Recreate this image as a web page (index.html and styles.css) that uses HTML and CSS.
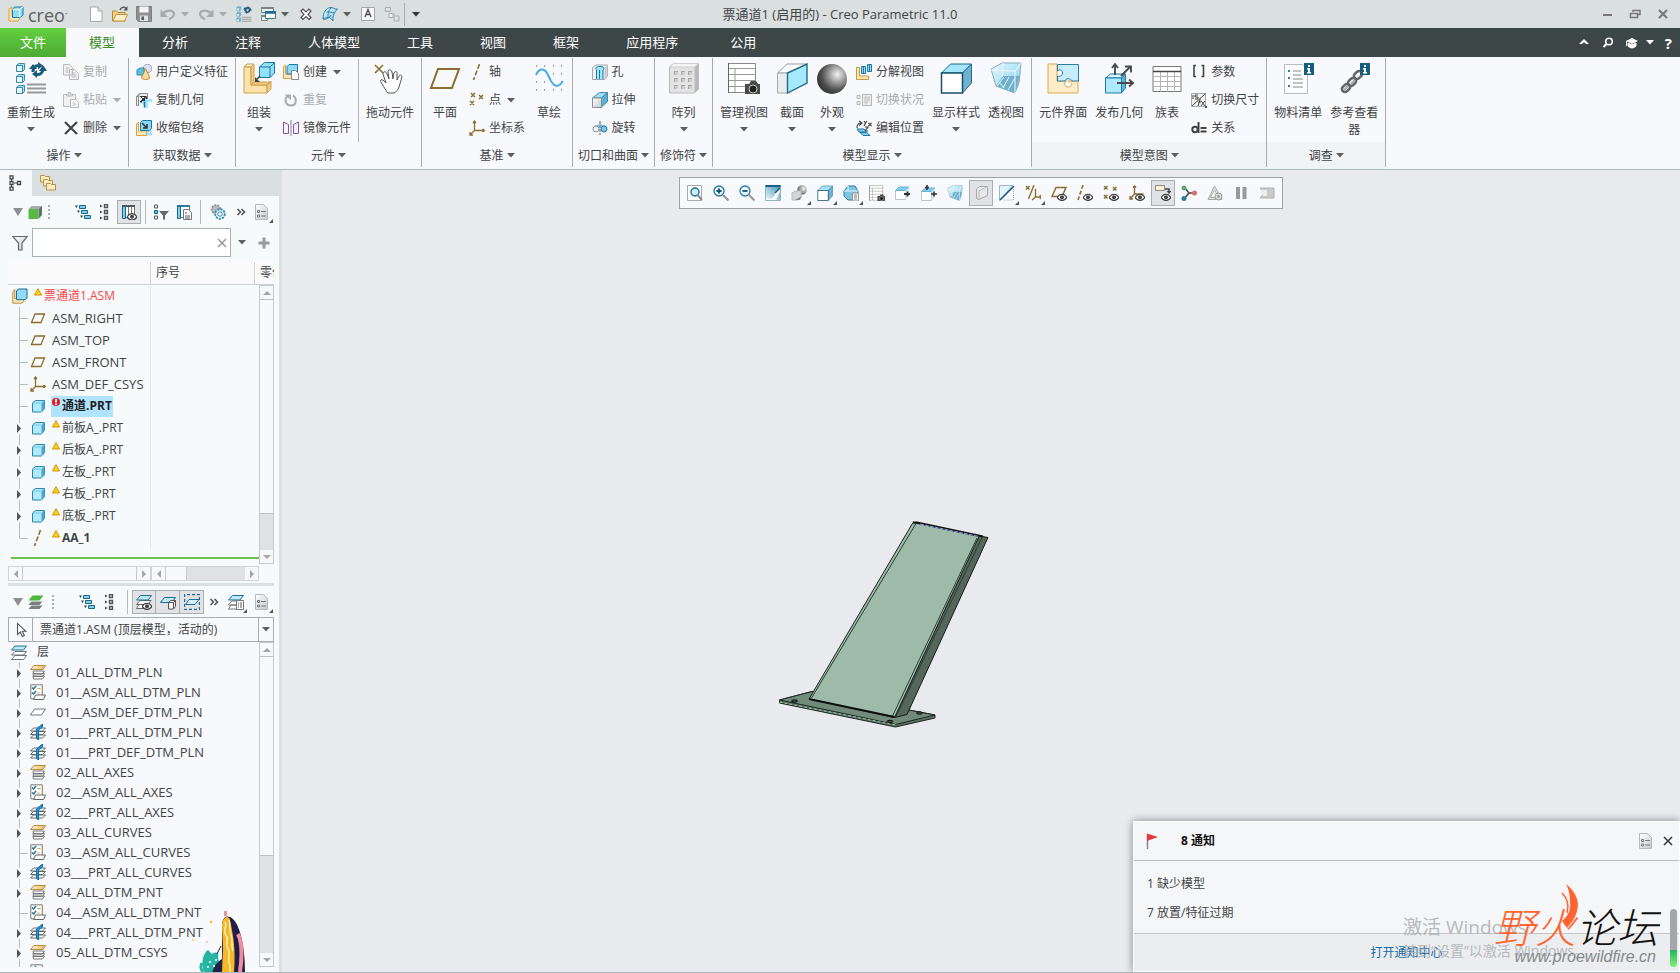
FILE: index.html
```html
<!DOCTYPE html>
<html lang="zh-CN">
<head>
<meta charset="utf-8">
<title>票通道1 (启用的) - Creo Parametric 11.0</title>
<link rel="stylesheet" href="styles.css">
</head>
<body>
<svg class="sprite" aria-hidden="true">
  <defs>
    <linearGradient id="g-blue" x1="0" y1="0" x2="1" y2="1"><stop offset="0" stop-color="#e8f9ff"/><stop offset="1" stop-color="#7fcdec"/></linearGradient>
    <linearGradient id="g-deep" x1="0" y1="1" x2="1" y2="0"><stop offset="0" stop-color="#f4fcff"/><stop offset="1" stop-color="#3f8fb5"/></linearGradient>
    <linearGradient id="g-gray" x1="0" y1="0" x2="1" y2="1"><stop offset="0" stop-color="#ffffff"/><stop offset="1" stop-color="#c4cacd"/></linearGradient>
    <linearGradient id="g-gold" x1="0" y1="0" x2="1" y2="0"><stop offset="0" stop-color="#fff0cf"/><stop offset="1" stop-color="#e8bd66"/></linearGradient>
    <radialGradient id="g-ball" cx=".68" cy=".35" r=".65"><stop offset="0" stop-color="#f4f4f4"/><stop offset=".35" stop-color="#aaaaaa"/><stop offset=".8" stop-color="#505050"/><stop offset="1" stop-color="#3c3c3c"/></radialGradient>
  </defs>
  <symbol id="caret"><path d="M0 0h8L4 4.5z" fill="currentColor"/></symbol>
  <symbol id="logo" viewBox="0 0 16 16"><path d="M1 3l3-2v9h8v2l-2 3H1z" fill="#fde6b4" stroke="#d9a441"/><path d="M4.500 3l2.500-2h8v8l-2.500 2.500h-8z" fill="#8fdcf8" stroke="#1b7aa3"/><path d="M4.500 3.500h7v8M12 3l3-2" fill="none" stroke="#fff"/></symbol>
  <symbol id="new" viewBox="0 0 16 16"><path d="M2.500 1h7.500l4 4v10.500H2.500z" fill="#fdfeff" stroke="#a3aaad"/><path d="M10 1v4h4" fill="#dde3e6" stroke="#a3aaad"/></symbol>
  <symbol id="open" viewBox="0 0 16 16"><path d="M.5 15V5h4l1.500 1.500h7V15z" fill="#f4cf84" stroke="#b98a37"/><path d="M1 15l3-6.500h11.500L12.500 15z" fill="#fdeecb" stroke="#c0964a"/><path d="M8 4c1-3 4-3.500 6-1.500" fill="none" stroke="#555" stroke-width="1.500"/><path d="M15.500 0v4.500h-4z" fill="#555"/></symbol>
  <symbol id="save" viewBox="0 0 16 16"><path d="M.5.5h15v15H2.500l-2-2z" fill="#8e9294" stroke="#7b7f80"/><path d="M3.500.5h9v6h-9z" fill="#f4f6f6"/><path d="M4 9.500h8V15H4z" fill="#dfe3e4"/><path d="M5.500 10.500h2.500V14H5.500z" fill="#555"/></symbol>
  <symbol id="undo" viewBox="0 0 16 16"><path d="M2.500 8C5 4 13 3 14 7.500c.5 3-3 4.500-5 6" fill="none" stroke="#a6abab" stroke-width="2.200"/><path d="M.5 3.500v7.500H8z" fill="#a6abab"/></symbol>
  <symbol id="redo" viewBox="0 0 16 16"><path d="M13.500 8C11 4 3 3 2 7.500c-.5 3 3 4.500 5 6" fill="none" stroke="#a6abab" stroke-width="2.200"/><path d="M15.500 3.500v7.500H8z" fill="#a6abab"/></symbol>
  <symbol id="regen" viewBox="0 0 32 32"><g fill="#9fe2fb" stroke="#3a87a8"><path d="M1.500 3.500h6v6h-6zM1.500 14.500h6v6h-6zM1.500 25.500h6v6h-6z" fill="#e5f8ff"/><path d="M1.500 3.500l2-2h6v6l-2 2v-6zM1.500 14.500l2-2h6v6l-2 2v-6zM1.500 25.500l2-2h6v6l-2 2v-6z"/></g><path d="M12 22.500h19M12 26.500h19M12 30.500h19" stroke="#989898" stroke-width="1.800"/><g fill="none" stroke="#1b5c7d" stroke-width="3"><path d="M18 10c0-5 3-6.500 6-6.500M28 6c0 5-3 7-7 6.500"/></g><path d="M23 0l5 3.500-5 4zM22 8v8l-5-4zM14 7h8l-4-5zM24 9h8l-4-6z" fill="#1b5c7d"/></symbol>
  <symbol id="wins" viewBox="0 0 16 16"><path d="M1.500 1.500h12v5h-12zM1.500 9.500h6v5h-6z" fill="#e9eeee" stroke="#7e8587"/><path d="M1 2h13M1 10h7" stroke="#7e8587" stroke-width="2"/><path d="M5.500 5.500h10v7h-10z" fill="#f7fbfd" stroke="#3a7791"/><path d="M5 6.500h11" stroke="#1d6c93" stroke-width="2.500"/></symbol>
  <symbol id="xbox" viewBox="0 0 16 16"><path d="M3 5l2-2 3 3 3-3 2 2-3 3.500 3 3-2 2-3-3-3 3-2-2 3-3z" fill="#fff" stroke="#555" stroke-width="1.200"/></symbol>
  <symbol id="surf" viewBox="0 0 16 16"><path d="M1 13C1 7 4 1.500 9 1.500c3 0 3 2 6.500 1.500-3 3-5 7-4.500 12-2-2-3-4-5-3.500-2 0-3 .5-5 1.500z" fill="url(#g-blue)" stroke="#2f7da3"/><path d="M4.500 6c4-1 5 1.500 8 .5M9 2C6 5 6 8 6 11.500M1 13c2 1 7-1 8-4" fill="none" stroke="#2f7da3"/></symbol>
  <symbol id="abox" viewBox="0 0 16 16"><path d="M1.500 1.500h13v13h-13z" fill="#f6f9fa" stroke="#9fa9ab"/><path d="M5 11l3-7.500 3 7.500M6 8.500h4" fill="none" stroke="#555" stroke-width="1.400"/></symbol>
  <symbol id="chain2" viewBox="0 0 16 16"><g fill="#dce1e1" stroke="#a8aeae"><path d="M1.500 1.500h5v4h-5zM10 10h5v5h-5z"/><path d="M5 7.500h4v4H5z" fill="#f2f4f4"/><path d="M9 7l2 2" /></g></symbol>
  <symbol id="copy" viewBox="0 0 16 16"><path d="M.5.500h6l3 3V11h-9zM6.500 5.500h5l4 4v6h-9z" fill="#f3f3f3" stroke="#b9b9b9"/><path d="M2.500 4h4M2.500 6h3M2.500 8h3M8.500 9h4M8.500 11h5M8.500 13h5" stroke="#b9b9b9"/></symbol>
  <symbol id="paste" viewBox="0 0 16 16"><path d="M.5 2.500h12v12H.5z" fill="#f0f0f0" stroke="#bcbcbc"/><path d="M3.500 4V2h2V.500h2V2h2v2z" fill="#ddd" stroke="#bcbcbc"/><path d="M7.500 7.500h5l3 3v5h-8z" fill="#fafafa" stroke="#b9b9b9"/><path d="M9.500 11h3M9.500 13h4" stroke="#bbb"/></symbol>
  <symbol id="del" viewBox="0 0 16 16"><path d="M2 2l12 12M14 2L2 14" stroke="#444" stroke-width="2.200"/></symbol>
  <symbol id="udf" viewBox="0 0 16 16"><circle cx="11.500" cy="4.500" r="4.300" fill="#dfe2f2" stroke="#9aa2c8"/><path d="M1 6l3-2h4v7H1z" fill="#62bfe3" stroke="#3189ad"/><path d="M9.500 4.500L5.500 14c2 2 6.500 2 8.500 0z" fill="#f7dca0" stroke="#b88d3b"/></symbol>
  <symbol id="cgeom" viewBox="0 0 16 16"><path d="M.5 4.500l3-3h8v10M.5 4.500v9h2v-9zM3 1.500v3" fill="#eee" stroke="#8a8a8a"/><path d="M4.500 4.500h6v6" fill="none" stroke="#333"/><path d="M9 5v5H4zM4 4l4 4" fill="#333" stroke="#333"/><path d="M6 12V9h3V7h7v3h-4v6H8v-3z" fill="#a5e5fd"/><path d="M8.500 9.500v6" stroke="#1b7aa3" stroke-width="1.500"/></symbol>
  <symbol id="shrink" viewBox="0 0 16 16"><path d="M.5 4l2-2v9h8v4.500H.5z" fill="#fde6b4" stroke="#d3a34b"/><path d="M4.500 2.500l2-2h9v8l-2 2h-9z" fill="#8ad8f6" stroke="#1b7aa3"/><path d="M6 3l5 5M11 4v4H7" fill="none" stroke="#333" stroke-width="1.500"/><path d="M11 11h5v4.500h-5z" fill="#a5e5fd"/></symbol>
  <symbol id="assemble" viewBox="0 0 32 32"><path d="M1 5l3-3h7L8 5z" fill="#fff1cf" stroke="#c9a050"/><path d="M1 5h7v18h16v8H1z" fill="#fde3ab" stroke="#c9a050"/><path d="M8 5l3-3v18l-3 3zM24 23l4-4v8l-4 4zM8 23l3-3h17l-4 3z" fill="#f2cb7c" stroke="#c9a050"/><path d="M16.500 5l5-4.500h10V11l-4.500 4.500H16.500z" fill="#93e0fb" stroke="#1d7ba3"/><path d="M16.500 5h10.500v10.500M27 5l4.500-4.500" fill="none" stroke="#1d7ba3"/><path d="M17 14l-3 3" stroke="#444" stroke-width="1.500"/><path d="M12 15v5h5z" fill="#444"/></symbol>
  <symbol id="create" viewBox="0 0 16 16"><path d="M.5 2.500l2-1.500v9h6v4.500h-8z" fill="#fde6b4" stroke="#d3a34b"/><path d="M4 2.500l2-2h8.500V8l-2 2H4z" fill="#8edbf8" stroke="#1b7aa3"/><path d="M8.500 6.500h4l3 3v6h-7z" fill="#fff" stroke="#8b8b8b"/></symbol>
  <symbol id="repeat" viewBox="0 0 16 16"><path d="M5 4C1 6.500 2 13.500 8 13.500S14 6 10 3.500" fill="none" stroke="#ababab" stroke-width="2"/><path d="M1.500 2.500H8V8z" fill="#ababab"/></symbol>
  <symbol id="mirror" viewBox="0 0 16 16"><path d="M.5 2l5 2.500v9H.5zM15.500 2l-5 2.500v9h5z" fill="#f5f0fb" stroke="#8454ab"/><path d="M8 0v16" stroke="#888"/></symbol>
  <symbol id="drag" viewBox="0 0 32 32"><path d="M1 3l8 8M9 3l-8 8" stroke="#8c6d2f" stroke-width="1.600"/><path d="M8 22c-2-3-2-5 1-4l3 3-3-9c0-3 3-3 4 0l2 5-1-7c0-3 3-3 4 0l1 7 1-6c1-2 3-2 3 0v7l2-4c1-2 3-1 3 1l-3 10c-1 3-3 5-5 6h-6c-2-2-4-6-6-9z" fill="#fff" stroke="#555"/></symbol>
  <symbol id="plane" viewBox="0 0 32 32"><path d="M9 7h21l-7 19H2z" fill="none" stroke="#8c6d2f" stroke-width="2"/></symbol>
  <symbol id="axis" viewBox="0 0 16 16"><path d="M10.500 0L4.500 16" stroke="#8c6d2f" stroke-width="1.600" stroke-dasharray="5 2"/></symbol>
  <symbol id="point" viewBox="0 0 16 16"><path d="M2 1l4 4M6 1L2 5M10 3l4 4M14 3l-4 4M1 9l4 4M5 9l-4 4" stroke="#8c6d2f" stroke-width="1.500"/></symbol>
  <symbol id="csys" viewBox="0 0 16 16"><path d="M5.500 1v9.500h10M5.500 10.500L1 15M4 3l1.500-2L7 3M13.500 9l2 1.500-2 1.500M1 12v3h3" fill="none" stroke="#8c6d2f" stroke-width="1.300"/></symbol>
  <symbol id="sketch" viewBox="0 0 32 32"><path d="M3 4h1M11 4h1M20 4h1M28 4h1M3 12h1M3 20h1M20 12h1M28 12h1M11 20h1M28 20h1M3 28h1M11 28h1M20 28h1M28 28h1" stroke="#444"/><path d="M3 13c3-7 8-7 11-2l4 8c4 7 8 6 12 0" fill="none" stroke="#4aaee0" stroke-width="2"/></symbol>
  <symbol id="hole" viewBox="0 0 16 16"><path d="M.5 4l3-3h12v11l-3 3.500H.5z" fill="#f1f3f4" stroke="#a1a6a8"/><path d="M12.500 4l3-3v11l-3 3.500z" fill="#c9ced0"/><path d="M4.500 15V6C3 4 4 2.500 8 2.500s5 1.500 3 3.500v9" fill="#a5e5fd" stroke="#1d7ba3"/><path d="M7.500 6v9" stroke="#1d7ba3"/></symbol>
  <symbol id="extrude" viewBox="0 0 16 16"><path d="M.5 6l7-5.500h8L9.500 6z" fill="#a6dcf1" stroke="#3b8db2"/><path d="M9.500 6l6-5.500v9L9.500 15z" fill="#5fb0d3" stroke="#3b8db2"/><path d="M.5 6h9v9.500h-9z" fill="url(#g-gray)" stroke="#8b9093"/></symbol>
  <symbol id="revolve" viewBox="0 0 16 16"><path d="M1 8c1-4 13-4 14 0" fill="#b9e6f7" stroke="#67b4d2"/><circle cx="4" cy="9" r="3" fill="#f1f4f5" stroke="#8c9295"/><circle cx="12" cy="9" r="3" fill="#7ac6e6" stroke="#257da4"/><path d="M8 1v14" stroke="#555" stroke-dasharray="3 1"/></symbol>
  <symbol id="pattern" viewBox="0 0 32 32"><path d="M1.500 5l4-3.500h25V27l-4 4h-25z" fill="#e3e3e3" stroke="#bababa"/><path d="M26.500 5l4-3.500V27l-4 4z" fill="#b9b9b9"/><path d="M1.500 5l4-3.500h25L26.500 5z" fill="#f3f3f3" stroke="#cfcfcf"/><path d="M6 9h4v4H6zM13 9h4v4h-4zM20 9h4v4h-4zM6 16h4v4H6zM13 16h4v4h-4zM20 16h4v4h-4zM6 23h4v4H6zM13 23h4v4h-4zM20 23h4v4h-4z" fill="#a5a5a5"/><path d="M7 10h3v3H7zM14 10h3v3h-3zM21 10h3v3h-3zM7 17h3v3H7zM14 17h3v3h-3zM21 17h3v3h-3zM7 24h3v3H7zM14 24h3v3h-3zM21 24h3v3h-3z" fill="#cdcdcd"/></symbol>
  <symbol id="mgview" viewBox="0 0 32 32"><path d="M.5 1.500h27v29H.5z" fill="#fff" stroke="#888"/><path d="M7 6v24M0 6.500h28M0 12.500h28M0 18.500h28M0 24.500h28" stroke="#999"/><path d="M.5 1v30" stroke="#666"/><path d="M17 22h4l2-3h5l2 3h2v10H17z" fill="#4a4a4a"/><circle cx="25" cy="27" r="4" fill="#222" stroke="#c5c5c5"/></symbol>
  <symbol id="section" viewBox="0 0 32 32"><path d="M1.500 11L11 2h20L11.500 11z" fill="#fff" stroke="#999"/><path d="M1.500 11h10v20h-10z" fill="#ececec" stroke="#aaa"/><path d="M11.500 11L31 2v19l-19.500 10z" fill="#a5e9fd" stroke="#20698f" stroke-width="1.400"/></symbol>
  <symbol id="ball" viewBox="0 0 32 32"><circle cx="16" cy="17" r="15" fill="url(#g-ball)"/></symbol>
  <symbol id="explode" viewBox="0 0 16 16"><path d="M.5 3.500h3V12h9v3.500H.5z" fill="#fde6b4" stroke="#c9993e"/><path d="M5.500 2.500h4v7h-4zM11.500.500h4v7h-4z" fill="#95dcf8" stroke="#1d7ba3"/><path d="M7.500 3v6M13.500 1v6" stroke="#1d7ba3"/></symbol>
  <symbol id="toggle" viewBox="0 0 16 16"><path d="M1 3.500h3v3H1zM1 9.500h3v3H1zM6.500 2.500h9v11h-9z" fill="#ececec" stroke="#b5b5b5"/><path d="M9 5v6h2V5zM13 4v5" stroke="#bbb" fill="none"/></symbol>
  <symbol id="editpos" viewBox="0 0 16 16"><path d="M1 8C1 4 3 3 5 3M3 1l3 2-3 2.500M8 1l1.500 2L11 1M9.500 3L8 6M12.500 3l3 3M15.500 3l-3 3M9 7h3l-3 4h3" fill="none" stroke="#444" stroke-width="1.200"/><path d="M1 9h7l2 3H3zM4 12.500h7l3 3H7z" fill="#80cbe9" stroke="#1d7ba3"/></symbol>
  <symbol id="dispstyle" viewBox="0 0 32 32"><path d="M1.500 11l9-9h21l-9 9z" fill="#a5e5fd" stroke="#20698f"/><path d="M22.500 11l9-9v19l-9 10z" fill="#6fb2d0" stroke="#20698f"/><path d="M1.500 11h21v20h-21z" fill="#fff" stroke="#174e6c" stroke-width="1.500"/></symbol>
  <symbol id="persp" viewBox="0 0 32 32"><path d="M1 7L12 1h19l-2 20-4 10-19-7z" fill="url(#g-blue)" stroke="#8dabb9"/><path d="M6 24l7-10h17l-5 17z" fill="#6fb0cb"/><path d="M13 1l-1 14M1 8l24 1 6-8M25 9v22M9 20l5 6M14 15l-7 9M19 15l-6 11M25 16l-7 12" fill="none" stroke="#eefaff"/></symbol>
  <symbol id="iface" viewBox="0 0 32 32"><path d="M1 2h9v17h10c-5 2-2 6 1 6 5 0 5-5 0-6h10v12H1z" fill="#ffedc9" stroke="#dba84f"/><path d="M10.500 2.500h21V19H25c-1-3-7-3-7 0h-7.500v-5c2 1 5 0 5-3s-3-4-5-2z" fill="#c7edfc" stroke="#2a7ca5"/></symbol>
  <symbol id="publish" viewBox="0 0 32 32"><path d="M2.500 16l5-4h15l-4 4z" fill="#d8f4fe" stroke="#1d7ba3"/><path d="M18.500 16l4-4v14l-4 5z" fill="#61b5d8" stroke="#1d7ba3"/><path d="M2.500 16h16v15h-16z" fill="#aee9fd" stroke="#1d7ba3"/><path d="M12 13V3M9 6l3-4 3 4M18 14l9-9M22 4.500h6v6M14 21h15M26 17.500l4 3.500-4 3.500" fill="none" stroke="#4a4a4a" stroke-width="1.900"/></symbol>
  <symbol id="famtab" viewBox="0 0 32 32"><path d="M2 4.500h28v25H2z" fill="#fff" stroke="#777"/><path d="M2 14.500h28M2 19.500h28M2 24.500h28M9.500 10v20M16.500 10v20M23.500 10v20" stroke="#b4b4b4"/><path d="M2 9.500h28" stroke="#444" stroke-width="1.500"/></symbol>
  <symbol id="param" viewBox="0 0 16 16"><path d="M5 1.500H3v11h2M10.500 1.500h2v11h-2" fill="none" stroke="#444" stroke-width="1.600"/></symbol>
  <symbol id="dims" viewBox="0 0 16 16"><path d="M.5 1.500h14v13H.5z" fill="#f3f3f3" stroke="#aaa"/><path d="M1 14L14.500 1.500M2 3v4M4 3h3M4 3v2h3v2H4M8 8c1-1 2-1 1 0l-2 6M7 10h3M10 9l4 5M14 9l-4 5" fill="none" stroke="#444"/><path d="M14 14h2v2h-2z" fill="#1d5c7d"/></symbol>
  <symbol id="rel" viewBox="0 0 16 16"><circle cx="4" cy="9.500" r="2.700" fill="none" stroke="#444" stroke-width="2"/><path d="M7.500 2v11M9.500 8h6M9.500 11.500h6" stroke="#444" stroke-width="2"/></symbol>
  <symbol id="bom" viewBox="0 0 32 32"><path d="M2.500 2.500h18l5 5v24h-23z" fill="#fcfdfe" stroke="#b7bcc0"/><path d="M6 9h2M6 16h2M6 24h2" stroke="#2c83ae" stroke-width="2.200"/><path d="M11 9h8M11 13h8M11 17h10M11 21h10M11 25h10" stroke="#888"/><path d="M22 1h10v12H22z" fill="#165d80"/><path d="M26 3h2v2h-2zM25 6h3v4h1v1.500h-4V10h1V7.500h-1z" fill="#fff"/></symbol>
  <symbol id="refview" viewBox="0 0 32 32"><g fill="none" stroke="#666" stroke-width="2.600"><rect x="-4.500" y="-3" width="9" height="6" rx="3" transform="translate(8 26) rotate(-45)"/><rect x="-4.500" y="-3" width="9" height="6" rx="3" transform="translate(14 20) rotate(-45)"/><rect x="-4.500" y="-3" width="9" height="6" rx="3" transform="translate(20 13) rotate(-45)"/></g><path d="M6 28l4-4M13 22l4-4" stroke="#aaa" stroke-width="2"/><path d="M22 1h10v12H22z" fill="#165d80"/><path d="M26 3h2v2h-2zM25 6h3v4h1v1.500h-4V10h1V7.500h-1z" fill="#fff"/></symbol>
  <symbol id="treetab" viewBox="0 0 16 16"><path d="M2 .8h3v3H2zM2 6.500h3v3H2zM2 12.200h3v3H2zM9.500 6.500h3v3h-3z" fill="#fff" stroke="#444" stroke-width="1.300"/><path d="M3.500 4v2M3.500 10v2M6 8h3" stroke="#444"/></symbol>
  <symbol id="folders" viewBox="0 0 16 16"><g fill="#fdebc4" stroke="#b98f42"><path d="M.5.500h4l1 1h4V7h-9z"/><path d="M3.500 4.500h4l1 1h4V11h-9z"/><path d="M6.500 8.500h4l1 1h4V15h-9z"/></g></symbol>
  <symbol id="tri" viewBox="0 0 16 16"><path d="M3 4h10l-5 8z" fill="#8b9092"/></symbol>
  <symbol id="cube" viewBox="0 0 16 16"><path d="M1.500 5l3-3H15l-3.500 3z" fill="#a5acab"/><path d="M11.500 5L15 2v9l-3.500 4z" fill="#66706e"/><path d="M1.500 5h10v10h-10z" fill="#58b947"/></symbol>
  <symbol id="dots" viewBox="0 0 4 16"><path d="M1 1h2v2H1zM1 5h2v2H1zM1 9h2v2H1zM1 13h2v2H1z" fill="#a9b2b3"/></symbol>
  <symbol id="expand" viewBox="0 0 16 16"><path d="M4.500 1.500h6v3h-6zM6.500 6.500h6v3h-6zM9.500 11.500h6v3h-6z" fill="#7dd0f2" stroke="#1b6588"/><path d="M0 1.500h3L1.500 4zM2 6.500h3L3.500 9zM5 11.500h3L6.500 14z" fill="#444"/></symbol>
  <symbol id="collapse" viewBox="0 0 16 16"><path d="M6.500.500h3v3h-3zM6.500 6.500h3v3h-3zM6.500 12.500h3v3h-3z" fill="#ddd" stroke="#555" stroke-width="1.400"/><path d="M2 .5v3L4.500 2zM2 6.500v3L4.500 8zM2 12.500v3L4.500 14z" fill="#444"/></symbol>
  <symbol id="eye"><path d="M0 4c3-4.500 7-4.500 10 0-3 4-7 4-10 0z" fill="#fff" stroke="#444" stroke-width="1.300"/><circle cx="5" cy="3.800" r="2" fill="#444"/></symbol>
  <symbol id="coleye" viewBox="0 0 16 16"><path d="M1.500 1.500h12v12h-12z" fill="#fff" stroke="#777"/><path d="M1 2h13" stroke="#555" stroke-width="2"/><path d="M1.500 2.500h3v12h-3z" fill="#7dd0f2" stroke="#1b6588"/><path d="M7.500 3v10M10.500 3v9" stroke="#777"/><use href="#eye" x="6" y="9"/></symbol>
  <symbol id="treefilter" viewBox="0 0 16 16"><path d="M1.500 1h3v3h-3zM1.500 12h3v3h-3z" fill="#fff" stroke="#555"/><path d="M1.500 6.500h3v3h-3z" fill="#5fb9df" stroke="#1b6588"/><path d="M6 7h10l-4 4.500V16l-2-1v-3.500z" fill="#666"/></symbol>
  <symbol id="coldoc" viewBox="0 0 16 16"><path d="M1.500 1.500h12v12h-12z" fill="#fff" stroke="#777"/><path d="M1 2h13" stroke="#2b7ea3" stroke-width="2"/><path d="M1.500 2.500h3v12h-3z" fill="#7dd0f2" stroke="#1b6588"/><path d="M7.500 5.500h5l3 3v7h-8z" fill="#fff" stroke="#777"/><path d="M9 9h2M9 12h5M9 14h5" stroke="#555"/></symbol>
  <symbol id="gear" viewBox="0 0 16 16"><circle cx="6" cy="5.500" r="4.300" fill="#b8bcbe" stroke="#8f9496" stroke-width="2" stroke-dasharray="2 1"/><circle cx="10" cy="10" r="4.800" fill="#dff4fc" stroke="#3a86a9" stroke-width="1.800" stroke-dasharray="2.200 1"/><circle cx="10" cy="10" r="2.200" fill="#fff" stroke="#3a86a9"/></symbol>
  <symbol id="more" viewBox="0 0 16 16"><path d="M4.500 5L7.500 8l-3 3M8.500 5l3 3-3 3" fill="none" stroke="#555" stroke-width="1.600"/></symbol>
  <symbol id="doc" viewBox="0 0 16 16"><path d="M1.500.500h8l4 4v11h-12z" fill="url(#g-gray)" stroke="#b3babd"/><path d="M3.500 6.500h2v2h-2zM3.500 11h2v2h-2z" fill="#fff" stroke="#777"/><path d="M7 7.500h5M7 12h5" stroke="#777"/></symbol>
  <symbol id="funnel" viewBox="0 0 16 16"><path d="M.8 1.500h14.500L10 8v7H6.500V8z" fill="url(#g-gray)" stroke="#666" stroke-width="1.200"/></symbol>
  <symbol id="x" viewBox="0 0 16 16"><path d="M4 4l8 8M12 4l-8 8" stroke="currentColor" stroke-width="1.500"/></symbol>
  <symbol id="plus" viewBox="0 0 16 16"><path d="M8 2.500v11M2.500 8h11" stroke="#999" stroke-width="3"/></symbol>
  <symbol id="asm" viewBox="0 0 16 16"><path d="M.8 4l2-2.500v9h9v3l-2 1.700h-9z" fill="#fde6b4" stroke="#b98f42"/><path d="M4.500 3l1.800-2h8.700v9l-1.800 1.700H4.500z" fill="#90dcf8" stroke="#1d6e95"/></symbol>
  <symbol id="dplane" viewBox="0 0 16 16"><path d="M5 4h9.500l-3.500 8.500H1.500z" fill="none" stroke="#8c6d2f" stroke-width="1.300"/></symbol>
  <symbol id="part" viewBox="0 0 16 16"><path d="M2.500 5l3-2.500h9v8L11.500 14h-9z" fill="#aee9fd" stroke="#2b84ab"/><path d="M11.500 5l3-2.500v8l-3 3.500z" fill="#4aa7ce"/><path d="M2.500 5h9v9" fill="none" stroke="#7cc5e0"/></symbol>
  <symbol id="warn" viewBox="0 0 8 8"><path d="M4 .7L7.500 7h-7z" fill="#ffd31a" stroke="#cf9200"/></symbol>
  <symbol id="err" viewBox="0 0 8 8"><circle cx="4" cy="4" r="4" fill="#d92027"/><path d="M4 1v3.500M4 5.500V7" stroke="#fff" stroke-width="1.800"/></symbol>
  <symbol id="b-tick"><path d="M7.500 0v22M7.500 11.500H16" stroke="#b9bfc1"/></symbol>
  <symbol id="b-end"><path d="M7.500 0v11.500H16" fill="none" stroke="#b9bfc1"/></symbol>
  <symbol id="b-exp"><path d="M7.500 0v6M7.500 17v5" stroke="#b9bfc1"/><path d="M5 7v9l4-4.500z" fill="#555"/></symbol>
  <symbol id="lroot" viewBox="0 0 16 16"><g fill="#fff" stroke="#6a7174"><path d="M4 11.500h11.500l-3 4H.5zM4 7.500h11.500l-3 3.500H.5z"/></g><path d="M4 2h11.500l-3 4H.5z" fill="#bfe9f9" stroke="#226f95"/></symbol>
  <symbol id="lall" viewBox="0 0 16 16"><g fill="#fff" stroke="#777"><path d="M3 12h11.500l-2 3h-9zM3 9.500h11.500l-2 3h-9zM3 7h11.500l-2 3h-9z"/></g><path d="M4 1.500h11.500l-2.500 4H.5z" fill="url(#g-gold)" stroke="#b58c40"/></symbol>
  <symbol id="lrule" viewBox="0 0 16 16"><path d="M.8.800h11.500v14H.8z" fill="#fdfaf2" stroke="#7c7c7c"/><path d="M2 3.500l1.500 1.500L6 2M2 8.500L3.500 10 6 7" fill="none" stroke="#1c79ab" stroke-width="1.500"/><path d="M7.500 4.500h3M7.500 9h2" stroke="#d0a24e"/><path d="M5.500 11h10l-2 4.500h-10z" fill="#fff" stroke="#666"/></symbol>
  <symbol id="lplane" viewBox="0 0 16 16"><path d="M4.500 5h11l-4 6H.5z" fill="#fff" stroke="#777"/></symbol>
  <symbol id="lprt" viewBox="0 0 16 16"><g fill="#fff" stroke="#666"><path d="M3.500 11h12l-3 3h-12zM3.500 7.500h12l-3 3h-12zM3.500 4h12l-3 3h-12z"/></g><path d="M12.500 0v3L8.500 6v10l-2-1.500V5z" fill="#2196d8" stroke="#0d6fa8"/></symbol>
  <symbol id="stack" viewBox="0 0 16 16"><path d="M3.500 11.500h11l-3 3.500H.5zM3.500 7.500h11l-3 3.500H.5z" fill="#7b8183"/><path d="M4.500 1.500h11l-4 5H.5z" fill="#4eb53d"/></symbol>
  <symbol id="leye" viewBox="0 0 16 16"><path d="M3 10.500h10l-2 4H.5zM4 6.500h11l-3 4H.5z" fill="#fff" stroke="#666"/><path d="M4.500 1.500h11l-3.500 4.500H.5z" fill="#bfe9f9" stroke="#226f95"/><use href="#eye" x="6" y="8.500"/></symbol>
  <symbol id="lcube" viewBox="0 0 16 16"><path d="M4.500 3.500h11l-4 5H.5z" fill="#bfe9f9" stroke="#226f95"/><path d="M8.500 8.500l2-2h5v6l-2 2.500h-5zM8.500 8.500h5v6M13.500 8.500l2-2" fill="#f4f4f4" stroke="#555"/></symbol>
  <symbol id="lsel" viewBox="0 0 16 16"><path d="M.5 3V.500h15V15.500H.5z" fill="none" stroke="#226f95" stroke-width="1.400" stroke-dasharray="3 2"/><path d="M5 5.500h10l-4 5H1.500z" fill="#d6f1fb" stroke="#226f95"/></symbol>
  <symbol id="ldoc" viewBox="0 0 16 16"><path d="M3 11h10l-2 4H.5zM4 7h11l-3 4H.5z" fill="#fff" stroke="#777"/><path d="M4.500 1.500h11l-3.500 4.500H.5z" fill="#bfe9f9" stroke="#226f95"/><path d="M8.500 6.500h7v9h-7z" fill="#fff" stroke="#777"/><path d="M10 9h1M12 9h2M10 11h1M12 11h2M10 13h1M12 13h2" stroke="#555"/></symbol>
  <symbol id="pointer" viewBox="0 0 16 16"><path d="M4.500 1.500v11l2.800-2.500 2 4.500 2-1-2-4.300h3.500z" fill="#fff" stroke="#555" stroke-width="1.100"/></symbol>
  <symbol id="zfit" viewBox="0 0 16 16"><path d="M.5.500h14v15H.5z" fill="#fff" stroke="#aaa"/><circle cx="8" cy="7" r="4" fill="#c9ecf9" stroke="#1d6e95" stroke-width="1.400"/><path d="M11 10.500l4 4.500" stroke="#888" stroke-width="2"/></symbol>
  <symbol id="zin" viewBox="0 0 16 16"><circle cx="6" cy="6" r="5" fill="#e2f5fc" stroke="#2a7ba1" stroke-width="1.300"/><path d="M6 3.500v5M3.500 6h5" stroke="#174e6c" stroke-width="1.800"/><path d="M10 10l5.500 5.500" stroke="#999" stroke-width="2.200"/></symbol>
  <symbol id="zout" viewBox="0 0 16 16"><circle cx="6" cy="6" r="5" fill="#e2f5fc" stroke="#2a7ba1" stroke-width="1.300"/><path d="M3.500 6h5" stroke="#174e6c" stroke-width="1.800"/><path d="M10 10l5.500 5.500" stroke="#999" stroke-width="2.200"/></symbol>
  <symbol id="repaint" viewBox="0 0 16 16"><path d="M.5.500h15v15H.5z" fill="url(#g-deep)" stroke="#8fb5c6"/><path d="M.5 1h15" stroke="#1d5f83" stroke-width="2"/><path d="M2 13c4 2 7 0 8-5l5-5v4l-4 8H1z" fill="#fff" opacity=".9"/><path d="M15 3l-5 5" stroke="#1d5f83" stroke-width="1.400"/></symbol>
  <symbol id="shade" viewBox="0 0 16 16"><circle cx="11" cy="5" r="4.800" fill="url(#g-ball)" opacity=".7"/><path d="M1 8l3-2h6v6l-3 3H1z" fill="#d5d5d5" stroke="#bbb"/><path d="M4 15h5l2-4z" fill="#888"/></symbol>
  <symbol id="saved" viewBox="0 0 16 16"><path d="M1 6l4-5h7l3 5v5l-2 4H5l-4-4z" fill="#7cc6e4" stroke="#2a7ba1"/><path d="M1 6h10l4 0M5 1v5" fill="none" stroke="#e6f8ff"/><path d="M9.500 8h6v8h-6z" fill="#f5f5f5" stroke="#999"/><path d="M11 10h3M11 12h3M11 14h3" stroke="#888"/></symbol>
  <symbol id="persp1" viewBox="0 0 16 16"><path d="M.5 5.500h10v9H.5z" fill="#fff" stroke="#b9c5ca"/><path d="M.5 5.500L4 2h10l-3.500 3.500z" fill="#83cdea" stroke="#68b4d2"/><path d="M10.500 5.500L14 2v9l-3.500 3.500z" fill="#cfe9f3"/><path d="M9 9h6M12.500 6.500v5" stroke="#333" stroke-width="1.800"/></symbol>
  <symbol id="persp2" viewBox="0 0 16 16"><path d="M.5 6.500h10v9H.5z" fill="#fff" stroke="#b9c5ca"/><path d="M.5 6.500L4 3h10l-3.500 3.500z" fill="#83cdea" stroke="#68b4d2"/><path d="M10.500 6.500L14 3v9l-3.500 3.500z" fill="#cfe9f3"/><path d="M10 9h6M13 6.500v5M6 0v5M4 2.500h4" stroke="#333" stroke-width="1.600"/></symbol>
  <symbol id="clipped" viewBox="0 0 16 16"><path d="M3.500 4l3-2.500h8v9L6 14.500l-2.500-1z" fill="#e8e8e8" stroke="#aaa"/><path d="M6 6l8.500-4.500M6 6v8.500" stroke="#bbb"/></symbol>
  <symbol id="xsec" viewBox="0 0 16 16"><path d="M.5.500h13L.5 15.500z" fill="#dff4fc" stroke="#9fb6bf"/><path d="M15 1L1 15" stroke="#1d5f83" stroke-width="1.600"/><path d="M14.500 4v11H4" fill="none" stroke="#aaa" stroke-dasharray="1 1"/></symbol>
  <symbol id="datums" viewBox="0 0 16 16"><path d="M1 1l3.500 3.500M4.500 1L1 4.500M9 0L3.500 14M10.500 4v8h5M10.500 12L7 15M15 10l1 2-1 2" fill="none" stroke="#8c6d2f" stroke-width="1.400" /></symbol>
  <symbol id="pleye" viewBox="0 0 16 16"><path d="M5 2.500h10l-4 9H1z" fill="none" stroke="#8c6d2f" stroke-width="1.500"/><use href="#eye" x="6" y="8.500"/></symbol>
  <symbol id="axeye" viewBox="0 0 16 16"><path d="M6 0L1 15" stroke="#8c6d2f" stroke-width="1.600" stroke-dasharray="4 2"/><use href="#eye" x="6" y="8.500"/></symbol>
  <symbol id="pteye" viewBox="0 0 16 16"><path d="M1 1l3.500 3.500M4.500 1L1 4.500M10 2l3.500 3.500M13.500 2L10 5.500M1 10l3.500 3.500M4.500 10L1 13.500" stroke="#8c6d2f" stroke-width="1.400"/><use href="#eye" x="6" y="8.500"/></symbol>
  <symbol id="cseye" viewBox="0 0 16 16"><path d="M5.500 1v8h9M5.500 9L1 14M4 2.500L5.500 1 7 2.500M1 11v3h3" fill="none" stroke="#8c6d2f" stroke-width="1.400"/><use href="#eye" x="6" y="8.500"/></symbol>
  <symbol id="anneye" viewBox="0 0 16 16"><path d="M.5.500h9v5h-9z" fill="#fff4d6" stroke="#888"/><path d="M10 4h4v4" fill="none" stroke="#444" stroke-width="1.500"/><path d="M11.500 6h5L14 9z" fill="#444"/><use href="#eye" x="6" y="8.500"/></symbol>
  <symbol id="spin" viewBox="0 0 16 16"><path d="M3 2l5 6h6M8 8l-5 6" fill="none" stroke="#444" stroke-width="1.500"/><circle cx="3" cy="3" r="2.500" fill="#5fa873"/><circle cx="13.500" cy="8" r="2.500" fill="#e06a6a"/><circle cx="3" cy="13.500" r="2.500" fill="#2a7ba1"/></symbol>
  <symbol id="simu" viewBox="0 0 16 16"><path d="M7.500 1L15 14.500H1z" fill="#e4e4e4" stroke="#a9a9a9"/><path d="M7.500 5l4 7.500h-8z" fill="#fff" stroke="#a9a9a9"/><circle cx="11.500" cy="11.500" r="3.500" fill="#ddd" stroke="#999"/><path d="M10.500 9.500v4l3-2z" fill="#999"/></symbol>
  <symbol id="pause" viewBox="0 0 16 16"><path d="M3 2h4v12H3zM9.500 2h4v12h-4z" fill="#999"/></symbol>
  <symbol id="resume" viewBox="0 0 16 16"><path d="M1 3h14v10H1l4-5z" fill="#c9c9c9" stroke="#b2b2b2"/><path d="M1 5h7v6H4z" fill="#eee"/></symbol>
  <symbol id="flag" viewBox="0 0 16 16"><path d="M2.500 1v15" stroke="#888" stroke-width="1.500"/><path d="M2 .5l11 3.500L2 8z" fill="#e23b3b"/></symbol>
  <symbol id="wmin" viewBox="0 0 16 16"><path d="M4 9h9" stroke="#777" stroke-width="2"/></symbol>
  <symbol id="wmax" viewBox="0 0 16 16"><path d="M6 6V4.500h7v4h-2M3.500 7.500h7v4h-7z" fill="none" stroke="#777" stroke-width="1.500"/></symbol>
  <symbol id="wclose" viewBox="0 0 16 16"><path d="M4 4l8 8M12 4l-8 8" stroke="#777" stroke-width="2"/></symbol>
  <symbol id="up" viewBox="0 0 16 16"><path d="M3 9l5-5 5 5h-3L8 7 6 9z" fill="#fff"/></symbol>
  <symbol id="find" viewBox="0 0 16 16"><circle cx="9" cy="6.500" r="3.300" fill="none" stroke="#fff" stroke-width="1.600"/><path d="M6.500 9L3.500 12" stroke="#fff" stroke-width="2"/></symbol>
  <symbol id="cap" viewBox="0 0 16 16"><path d="M2 6l6-3 6 3-6 3z" fill="#fff"/><path d="M4 8l4 2 4-2v3c-2 2.500-6 2.500-8 0zM2.500 6v5" fill="#fff" stroke="#fff"/></symbol>
</svg>

<div class="app">
  <header class="titlebar">
    <div class="quick">
      <svg class="i brandmark"><use href="#logo"/></svg><span class="brand">creo<small>•</small></span>
      <button class="q" aria-label="新建"><svg class="i"><use href="#new"/></svg></button>
      <button class="q" aria-label="打开"><svg class="i"><use href="#open"/></svg></button>
      <button class="q" aria-label="保存"><svg class="i"><use href="#save"/></svg></button>
      <button class="q" aria-label="撤销"><svg class="i"><use href="#undo"/></svg></button>
      <button class="qa off" aria-label="撤销列表"><svg class="caret"><use href="#caret"/></svg></button>
      <button class="q" aria-label="重做"><svg class="i"><use href="#redo"/></svg></button>
      <button class="qa off" aria-label="重做列表"><svg class="caret"><use href="#caret"/></svg></button>
      <button class="q" aria-label="重新生成"><svg class="i"><use href="#regen"/></svg></button>
      <button class="q" aria-label="窗口"><svg class="i"><use href="#wins"/></svg></button>
      <button class="qa" aria-label="窗口列表"><svg class="caret"><use href="#caret"/></svg></button>
      <button class="q" aria-label="关闭"><svg class="i"><use href="#xbox"/></svg></button>
      <button class="q" aria-label="曲面"><svg class="i"><use href="#surf"/></svg></button>
      <button class="qa" aria-label="曲面列表"><svg class="caret"><use href="#caret"/></svg></button>
      <button class="q" aria-label="注释"><svg class="i"><use href="#abox"/></svg></button>
      <button class="q" aria-label="链接"><svg class="i"><use href="#chain2"/></svg></button>
      <span class="qsep"></span>
      <button class="qa custom" aria-label="自定义"><svg class="caret"><use href="#caret"/></svg></button>
    </div>
    <h1>票通道1 (启用的) - Creo Parametric 11.0</h1>
    <div class="winbtns">
      <button aria-label="最小化"><svg class="i"><use href="#wmin"/></svg></button>
      <button aria-label="还原"><svg class="i"><use href="#wmax"/></svg></button>
      <button aria-label="关闭窗口"><svg class="i"><use href="#wclose"/></svg></button>
    </div>
  </header>

  <nav class="tabs">
    <button class="tab file">文件</button>
    <button class="tab active">模型</button>
    <button class="tab">分析</button>
    <button class="tab">注释</button>
    <button class="tab">人体模型</button>
    <button class="tab">工具</button>
    <button class="tab">视图</button>
    <button class="tab">框架</button>
    <button class="tab">应用程序</button>
    <button class="tab addon">公用</button>
    <div class="tabtools">
      <button aria-label="收起"><svg class="i"><use href="#up"/></svg></button>
      <button aria-label="搜索"><svg class="i"><use href="#find"/></svg></button>
      <button class="learn" aria-label="学习"><svg class="i"><use href="#cap"/></svg><svg class="caret"><use href="#caret"/></svg></button>
      <button class="help">?</button>
    </div>
  </nav>

  <section class="ribbon">
    <div class="group">
      <div class="body">
        <button class="big"><svg class="I"><use href="#regen"/></svg><span>重新生成</span><svg class="caret"><use href="#caret"/></svg></button>
        <div class="col">
          <button class="sm off"><svg class="i"><use href="#copy"/></svg>复制</button>
          <button class="sm off"><svg class="i"><use href="#paste"/></svg>粘贴<svg class="caret"><use href="#caret"/></svg></button>
          <button class="sm"><svg class="i"><use href="#del"/></svg>删除<svg class="caret"><use href="#caret"/></svg></button>
        </div>
      </div>
      <button class="glabel">操作<svg class="caret"><use href="#caret"/></svg></button>
    </div>
    <div class="group">
      <div class="body">
        <div class="col">
          <button class="sm"><svg class="i"><use href="#udf"/></svg>用户定义特征</button>
          <button class="sm"><svg class="i"><use href="#cgeom"/></svg>复制几何</button>
          <button class="sm"><svg class="i"><use href="#shrink"/></svg>收缩包络</button>
        </div>
      </div>
      <button class="glabel">获取数据<svg class="caret"><use href="#caret"/></svg></button>
    </div>
    <div class="group">
      <div class="body">
        <button class="big"><svg class="I"><use href="#assemble"/></svg><span>组装</span><svg class="caret"><use href="#caret"/></svg></button>
        <div class="col">
          <button class="sm"><svg class="i"><use href="#create"/></svg>创建<svg class="caret"><use href="#caret"/></svg></button>
          <button class="sm off"><svg class="i"><use href="#repeat"/></svg>重复</button>
          <button class="sm"><svg class="i"><use href="#mirror"/></svg>镜像元件</button>
        </div>
        <span class="inner-sep"></span>
        <button class="big"><svg class="I"><use href="#drag"/></svg><span>拖动元件</span></button>
      </div>
      <button class="glabel">元件<svg class="caret"><use href="#caret"/></svg></button>
    </div>
    <div class="group">
      <div class="body">
        <button class="big"><svg class="I"><use href="#plane"/></svg><span>平面</span></button>
        <div class="col">
          <button class="sm"><svg class="i"><use href="#axis"/></svg>轴</button>
          <button class="sm"><svg class="i"><use href="#point"/></svg>点<svg class="caret"><use href="#caret"/></svg></button>
          <button class="sm"><svg class="i"><use href="#csys"/></svg>坐标系</button>
        </div>
        <button class="big"><svg class="I"><use href="#sketch"/></svg><span>草绘</span></button>
      </div>
      <button class="glabel">基准<svg class="caret"><use href="#caret"/></svg></button>
    </div>
    <div class="group">
      <div class="body">
        <div class="col">
          <button class="sm"><svg class="i"><use href="#hole"/></svg>孔</button>
          <button class="sm"><svg class="i"><use href="#extrude"/></svg>拉伸</button>
          <button class="sm"><svg class="i"><use href="#revolve"/></svg>旋转</button>
        </div>
      </div>
      <button class="glabel">切口和曲面<svg class="caret"><use href="#caret"/></svg></button>
    </div>
    <div class="group">
      <div class="body">
        <button class="big"><svg class="I"><use href="#pattern"/></svg><span>阵列</span><svg class="caret"><use href="#caret"/></svg></button>
      </div>
      <button class="glabel">修饰符<svg class="caret"><use href="#caret"/></svg></button>
    </div>
    <div class="group">
      <div class="body">
        <button class="big"><svg class="I"><use href="#mgview"/></svg><span>管理视图</span><svg class="caret"><use href="#caret"/></svg></button>
        <button class="big"><svg class="I"><use href="#section"/></svg><span>截面</span><svg class="caret"><use href="#caret"/></svg></button>
        <button class="big"><svg class="I"><use href="#ball"/></svg><span>外观</span><svg class="caret"><use href="#caret"/></svg></button>
        <div class="col">
          <button class="sm"><svg class="i"><use href="#explode"/></svg>分解视图</button>
          <button class="sm off"><svg class="i"><use href="#toggle"/></svg>切换状况</button>
          <button class="sm"><svg class="i"><use href="#editpos"/></svg>编辑位置</button>
        </div>
        <button class="big"><svg class="I"><use href="#dispstyle"/></svg><span>显示样式</span><svg class="caret"><use href="#caret"/></svg></button>
        <button class="big"><svg class="I"><use href="#persp"/></svg><span>透视图</span></button>
      </div>
      <button class="glabel">模型显示<svg class="caret"><use href="#caret"/></svg></button>
    </div>
    <div class="group tinted">
      <div class="body">
        <button class="big"><svg class="I"><use href="#iface"/></svg><span>元件界面</span></button>
        <button class="big"><svg class="I"><use href="#publish"/></svg><span>发布几何</span></button>
        <button class="big"><svg class="I"><use href="#famtab"/></svg><span>族表</span></button>
        <div class="col">
          <button class="sm"><svg class="i"><use href="#param"/></svg>参数</button>
          <button class="sm"><svg class="i"><use href="#dims"/></svg>切换尺寸</button>
          <button class="sm"><svg class="i"><use href="#rel"/></svg>关系</button>
        </div>
      </div>
      <button class="glabel">模型意图<svg class="caret"><use href="#caret"/></svg></button>
    </div>
    <div class="group tinted">
      <div class="body">
        <button class="big"><svg class="I"><use href="#bom"/></svg><span>物料清单</span></button>
        <button class="big"><svg class="I"><use href="#refview"/></svg><span>参考查看器</span></button>
      </div>
      <button class="glabel">调查<svg class="caret"><use href="#caret"/></svg></button>
    </div>
  </section>

  <main class="work">
    <aside class="side">
      <div class="sidetabs">
        <button class="active" aria-label="模型树"><svg class="i"><use href="#treetab"/></svg></button>
        <button aria-label="文件夹浏览器"><svg class="i"><use href="#folders"/></svg></button>
      </div>

      <div class="tools">
        <button class="w-tri" aria-label="折叠"><svg class="i"><use href="#tri"/></svg></button>
        <button class="w-main" aria-label="模型"><svg class="i"><use href="#cube"/></svg></button>
        <svg class="grip"><use href="#dots"/></svg>
        <button aria-label="全部展开"><svg class="i"><use href="#expand"/></svg></button>
        <button aria-label="全部折叠"><svg class="i"><use href="#collapse"/></svg></button>
        <button class="on" aria-label="显示列"><svg class="i"><use href="#coleye"/></svg></button>
        <span class="tsep"></span>
        <button aria-label="树过滤器"><svg class="i"><use href="#treefilter"/></svg></button>
        <button aria-label="树列"><svg class="i"><use href="#coldoc"/></svg></button>
        <span class="tsep"></span>
        <button class="w-gear" aria-label="设置"><svg class="i"><use href="#gear"/></svg></button>
        <button class="w-more" aria-label="更多"><svg class="i"><use href="#more"/></svg></button>
        <button class="menu last" aria-label="树选项"><svg class="i"><use href="#doc"/></svg></button>
      </div>

      <div class="filter">
        <svg class="i"><use href="#funnel"/></svg>
        <div class="search"><input type="text" aria-label="过滤"><button aria-label="清除"><svg class="i"><use href="#x"/></svg></button></div>
        <button aria-label="过滤选项"><svg class="caret"><use href="#caret"/></svg></button>
        <button aria-label="添加"><svg class="i"><use href="#plus"/></svg></button>
      </div>

      <div class="treewrap">
        <table class="tree">
          <colgroup><col class="c1"><col class="c2"><col></colgroup>
          <thead><tr><th aria-label="名称"></th><th>序号</th><th>零件</th></tr></thead>
          <tbody>
            <tr><td><div class="node root"><svg class="i"><use href="#asm"/></svg><span class="name bad"><svg class="s"><use href="#warn"/></svg>票通道1.ASM</span></div></td><td></td><td></td></tr>
            <tr><td><div class="node"><svg class="br"><use href="#b-tick"/></svg><svg class="i"><use href="#dplane"/></svg><span class="name datum">ASM_RIGHT</span></div></td><td></td><td></td></tr>
            <tr><td><div class="node"><svg class="br"><use href="#b-tick"/></svg><svg class="i"><use href="#dplane"/></svg><span class="name datum">ASM_TOP</span></div></td><td></td><td></td></tr>
            <tr><td><div class="node"><svg class="br"><use href="#b-tick"/></svg><svg class="i"><use href="#dplane"/></svg><span class="name datum">ASM_FRONT</span></div></td><td></td><td></td></tr>
            <tr><td><div class="node"><svg class="br"><use href="#b-tick"/></svg><svg class="i"><use href="#csys"/></svg><span class="name datum">ASM_DEF_CSYS</span></div></td><td></td><td></td></tr>
            <tr><td><div class="node"><svg class="br"><use href="#b-tick"/></svg><svg class="i"><use href="#part"/></svg><span class="name strong picked"><svg class="s"><use href="#err"/></svg>通道.PRT</span></div></td><td></td><td></td></tr>
            <tr><td><div class="node"><svg class="br"><use href="#b-exp"/></svg><svg class="i"><use href="#part"/></svg><span class="name"><svg class="s"><use href="#warn"/></svg>前板A_.PRT</span></div></td><td></td><td></td></tr>
            <tr><td><div class="node"><svg class="br"><use href="#b-exp"/></svg><svg class="i"><use href="#part"/></svg><span class="name"><svg class="s"><use href="#warn"/></svg>后板A_.PRT</span></div></td><td></td><td></td></tr>
            <tr><td><div class="node"><svg class="br"><use href="#b-exp"/></svg><svg class="i"><use href="#part"/></svg><span class="name"><svg class="s"><use href="#warn"/></svg>左板_.PRT</span></div></td><td></td><td></td></tr>
            <tr><td><div class="node"><svg class="br"><use href="#b-exp"/></svg><svg class="i"><use href="#part"/></svg><span class="name"><svg class="s"><use href="#warn"/></svg>右板_.PRT</span></div></td><td></td><td></td></tr>
            <tr><td><div class="node"><svg class="br"><use href="#b-exp"/></svg><svg class="i"><use href="#part"/></svg><span class="name"><svg class="s"><use href="#warn"/></svg>底板_.PRT</span></div></td><td></td><td></td></tr>
            <tr><td><div class="node"><svg class="br"><use href="#b-end"/></svg><svg class="i"><use href="#axis"/></svg><span class="name strong"><svg class="s"><use href="#warn"/></svg>AA_1</span></div></td><td></td><td></td></tr>
          </tbody>
        </table>
        <div class="insert"></div>
        <div class="vbar treebar"><i class="up"></i><b class="t1"></b><i class="down"></i></div>
      </div>
      <div class="hbars">
        <div class="hbar first"><i class="left"></i><b></b><i class="right"></i></div>
        <div class="hbar"><i class="left"></i><b class="short"></b><span></span><i class="right"></i></div>
      </div>

      <div class="tools layers-tools">
        <button class="w-tri" aria-label="折叠层"><svg class="i"><use href="#tri"/></svg></button>
        <button class="w-main" aria-label="层"><svg class="i"><use href="#stack"/></svg></button>
        <svg class="grip"><use href="#dots"/></svg>
        <button aria-label="全部展开"><svg class="i"><use href="#expand"/></svg></button>
        <button aria-label="全部折叠"><svg class="i"><use href="#collapse"/></svg></button>
        <span class="tsep"></span>
        <button class="on" aria-label="显示层"><svg class="i"><use href="#leye"/></svg></button>
        <button class="on" aria-label="层中模型"><svg class="i"><use href="#lcube"/></svg></button>
        <button class="on" aria-label="选定层"><svg class="i"><use href="#lsel"/></svg></button>
        <button class="w-more" aria-label="更多"><svg class="i"><use href="#more"/></svg></button>
        <button class="menu" aria-label="层菜单"><svg class="i"><use href="#ldoc"/></svg></button>
        <button class="menu last" aria-label="层选项"><svg class="i"><use href="#doc"/></svg></button>
      </div>

      <div class="combo">
        <button aria-label="选择"><svg class="i"><use href="#pointer"/></svg></button>
        <select aria-label="活动层对象"><option>票通道1.ASM (顶层模型，活动的)</option></select>
        <span class="drop"><svg class="caret"><use href="#caret"/></svg></span>
      </div>

      <div class="layers">
        <ul>
          <li class="root"><svg class="i"><use href="#lroot"/></svg>层</li>
          <li><svg class="br"><use href="#b-exp"/></svg><svg class="i"><use href="#lall"/></svg>01_ALL_DTM_PLN</li>
          <li><svg class="br"><use href="#b-exp"/></svg><svg class="i"><use href="#lrule"/></svg>01__ASM_ALL_DTM_PLN</li>
          <li><svg class="br"><use href="#b-exp"/></svg><svg class="i"><use href="#lplane"/></svg>01__ASM_DEF_DTM_PLN</li>
          <li><svg class="br"><use href="#b-exp"/></svg><svg class="i"><use href="#lprt"/></svg>01___PRT_ALL_DTM_PLN</li>
          <li><svg class="br"><use href="#b-exp"/></svg><svg class="i"><use href="#lprt"/></svg>01___PRT_DEF_DTM_PLN</li>
          <li><svg class="br"><use href="#b-exp"/></svg><svg class="i"><use href="#lall"/></svg>02_ALL_AXES</li>
          <li><svg class="br"><use href="#b-exp"/></svg><svg class="i"><use href="#lrule"/></svg>02__ASM_ALL_AXES</li>
          <li><svg class="br"><use href="#b-exp"/></svg><svg class="i"><use href="#lprt"/></svg>02___PRT_ALL_AXES</li>
          <li><svg class="br"><use href="#b-exp"/></svg><svg class="i"><use href="#lall"/></svg>03_ALL_CURVES</li>
          <li><svg class="br"><use href="#b-tick"/></svg><svg class="i"><use href="#lrule"/></svg>03__ASM_ALL_CURVES</li>
          <li><svg class="br"><use href="#b-exp"/></svg><svg class="i"><use href="#lprt"/></svg>03___PRT_ALL_CURVES</li>
          <li><svg class="br"><use href="#b-exp"/></svg><svg class="i"><use href="#lall"/></svg>04_ALL_DTM_PNT</li>
          <li><svg class="br"><use href="#b-tick"/></svg><svg class="i"><use href="#lrule"/></svg>04__ASM_ALL_DTM_PNT</li>
          <li><svg class="br"><use href="#b-exp"/></svg><svg class="i"><use href="#lprt"/></svg>04___PRT_ALL_DTM_PNT</li>
          <li><svg class="br"><use href="#b-exp"/></svg><svg class="i"><use href="#lall"/></svg>05_ALL_DTM_CSYS</li>
          <li><svg class="br"><use href="#b-tick"/></svg><svg class="i"><use href="#lrule"/></svg>05__ASM_ALL_DTM_CSYS</li>
        </ul>
        <div class="vbar"><i class="up"></i><b class="t2"></b><i class="down"></i></div>
      </div>

      <svg class="surfboard" viewBox="0 0 60 62" aria-hidden="true">
        <path d="M13 62c-4-10 0-20 4-22l4 4c5-3 7-1 6 4l4 14z" fill="#26b5a2"/>
        <path d="M12 62c-2-2-3-6-1-9" fill="none" stroke="#26b5a2" stroke-width="3"/>
        <path d="M30 36l-4 8M22 62c1-6 5-11 12-14v14z" stroke="#22204a" fill="#22204a"/>
        <path d="M31 62V16c0-8 4-11 8-9 8 3 15 24 15 55z" fill="#211d48"/>
        <path d="M47 24c5 10 4 24 2 38" stroke="#ee8fa0" stroke-width="4" fill="none"/>
        <path d="M31 62l1-24-1-22c0-8 6-12 8-6 3 14 6 30 4 52z" fill="#f5b927"/>
        <path d="M34 12c3 4-3 8 1 13s-2 9 2 14-2 10 2 16v7M38 10c2 5-1 9 2 15s-1 9 2 16" fill="none" stroke="#fff3c8" stroke-width="1.300"/>
        <path d="M33 1h3v5h-3z" fill="#ee8fa0"/><circle cx="20" cy="12" r="1.500" fill="#f5c85a"/><circle cx="2" cy="30" r="1" fill="#f5c85a"/><circle cx="16" cy="32" r="1.200" fill="#f6c9cf"/>
        <path d="M18 52h2M24 50h2M22 56h2M16 57h2" stroke="#fff" stroke-width="1.500"/>
      </svg>
    </aside>

    <section class="canvas">
      <div class="viewbar">
        <button aria-label="重新调整"><svg class="i"><use href="#zfit"/></svg></button>
        <button aria-label="放大"><svg class="i"><use href="#zin"/></svg></button>
        <button aria-label="缩小"><svg class="i"><use href="#zout"/></svg></button>
        <button aria-label="重画"><svg class="i"><use href="#repaint"/></svg></button>
        <button class="menu" aria-label="渲染"><svg class="i"><use href="#shade"/></svg></button>
        <button class="menu" aria-label="显示样式"><svg class="i"><use href="#dispstyle"/></svg></button>
        <button class="menu" aria-label="已保存方向"><svg class="i"><use href="#saved"/></svg></button>
        <button aria-label="视图管理器"><svg class="i"><use href="#mgview"/></svg></button>
        <button aria-label="方向"><svg class="i"><use href="#persp1"/></svg></button>
        <button aria-label="视图法向"><svg class="i"><use href="#persp2"/></svg></button>
        <button aria-label="透视图"><svg class="i"><use href="#persp"/></svg></button>
        <button class="on" aria-label="裁剪"><svg class="i"><use href="#clipped"/></svg></button>
        <button class="menu" aria-label="截面"><svg class="i"><use href="#xsec"/></svg></button>
        <button class="menu" aria-label="基准显示"><svg class="i"><use href="#datums"/></svg></button>
        <button aria-label="平面显示"><svg class="i"><use href="#pleye"/></svg></button>
        <button aria-label="轴显示"><svg class="i"><use href="#axeye"/></svg></button>
        <button aria-label="点显示"><svg class="i"><use href="#pteye"/></svg></button>
        <button aria-label="坐标系显示"><svg class="i"><use href="#cseye"/></svg></button>
        <button class="on" aria-label="注释显示"><svg class="i"><use href="#anneye"/></svg></button>
        <button aria-label="旋转中心"><svg class="i"><use href="#spin"/></svg></button>
        <button aria-label="仿真"><svg class="i"><use href="#simu"/></svg></button>
        <button aria-label="暂停"><svg class="i"><use href="#pause"/></svg></button>
        <button aria-label="继续"><svg class="i"><use href="#resume"/></svg></button>
      </div>

      <svg class="model" viewBox="0 0 210 210" role="img" aria-label="三维模型">
        <g stroke-linejoin="round">
          <path d="M.5 180L33 171.500l123 23.500v3L116.500 207 .5 183z" fill="#5c7364" stroke="#1c2620"/>
          <path d="M.5 180L33 171.500l123 23.500-39.500 9.500z" fill="#708b7a" stroke="#1c2620"/>
          <path d="M.5 182l116 23" stroke="#a6c5b2" stroke-dasharray="3 2"/>
          <path d="M200 16l9 1.500-81 177-12.500 3z" fill="#55665a" stroke="#151b17"/>
          <path d="M134 2.500l66 14-84.500 181L30 179z" fill="#9ebbaa" stroke="#1c2620"/>
          <path d="M137 3.500L32.500 178M198 18l-84.500 178M203 17.500l-86 179" fill="none" stroke="#2d3d33"/>
          <path d="M30 179l85.500 18" stroke="#0c0f0d" stroke-width="1.800"/>
          <path d="M134 2.500l4 0 66 14" fill="none" stroke="#111" stroke-width="2"/>
          <path d="M141 4l59 12.500" stroke="#8d9ce6" stroke-dasharray="4 1"/>
        </g>
        <g fill="#3e5246" stroke="#111"><ellipse cx="15.500" cy="181" rx="3" ry="1.200"/><ellipse cx="111" cy="201.500" rx="3" ry="1.200"/><ellipse cx="140.500" cy="193" rx="3" ry="1.200"/></g>
      </svg>

      <section class="notice">
        <header><svg class="i"><use href="#flag"/></svg><h2>8 通知</h2><button aria-label="设置"><svg class="i"><use href="#doc"/></svg></button><button aria-label="关闭通知"><svg class="i"><use href="#x"/></svg></button></header>
        <ul><li>1 缺少模型</li><li>7 放置/特征过期</li></ul>
        <footer><a href="#">打开通知中心</a></footer>
      </section>

      <div class="activate"><p>激活 Windows</p><p class="hint">转到“设置”以激活 Windows。</p></div>
      <div class="forum">
        <p><span>野火</span>论坛</p>
        <p class="site">www.proewildfire.cn</p>
        <svg viewBox="0 0 20 46" aria-hidden="true"><path d="M6 0c10 8 14 18 11 27-2 8-6 12-10 17l-5-7c7-6 9-12 8-19C10 11 9 6 6 0z" fill="#ff6430"/><path d="M2 9c6 6 7 13 5 20" fill="none" stroke="#ff6430" stroke-width="1.500"/></svg>
      </div>
      <div class="meter"></div>
    </section>
  </main>
</div>
</body>
</html>
```

FILE: styles.css
```css
* { box-sizing: border-box; }
body, h1, h2, p, ul { margin: 0; padding: 0; }
ul { list-style: none; }
body {
  font: 12px/16px "Open Sans", "Noto Sans CJK SC", sans-serif;
  color: #3f4445;
  background: #e8eaee;
  overflow: hidden;
}
button {
  font: inherit;
  color: inherit;
  background: none;
  border: 0;
  padding: 0;
  margin: 0;
}
svg { display: block; flex: none; }
.sprite { position: absolute; width: 0; height: 0; }
.i { width: 16px; height: 16px; }
.I { width: 32px; height: 32px; }
.caret { width: 8px; height: 5px; color: #5a5f60; }

.app {
  display: flex;
  flex-direction: column;
  height: 100vh;
  border-bottom: 1px solid #a9b8b8;
}

/* title bar */
.titlebar {
  display: grid;
  grid-template-columns: 1fr auto 1fr;
  align-items: center;
  height: 28px;
  background: #dadfdf;
}
.titlebar h1 { font-size: 13px; font-weight: 400; line-height: 20px; }
.quick { display: flex; align-items: center; }
.brandmark { margin-left: 8px; }
.brand {
  width: 60px;
  padding-left: 4px;
  font: 18px/20px "Open Sans", sans-serif;
  color: #5c6163;
}
.brand small { font-size: 6px; vertical-align: 6px; }
.q { display: flex; justify-content: center; width: 24px; }
.qa { display: flex; width: 14px; padding-left: 1px; }
.quick .off .caret { color: #a6abab; }
.qsep { width: 1px; height: 23px; background: #a9aeae; }
.custom { margin-left: 6px; border-top: 0; }
.custom .caret { color: #333; border-top: 0; }
.winbtns { display: flex; justify-content: flex-end; gap: 12px; padding-right: 9px; }

/* tab strip */
.tabs { display: flex; height: 29px; background: #3d4748; color: #fff; }
.tab { padding: 0 23px; margin-right: 1px; font-size: 13px; line-height: 29px; }
.tab.file { padding: 0 20px; margin: 0; background: linear-gradient(#62cf3c, #4faa35); }
.tab.active { padding: 0 24px 0 23px; margin: 0; background: #f8f9fc; color: #3f8c26; }
.tab.addon { margin-left: 5px; }
.tabtools { display: flex; align-items: center; gap: 8px; margin-left: auto; padding-right: 8px; }
.learn { display: flex; align-items: center; gap: 6px; }
.learn .caret { color: #fff; }
.help { font-size: 15px; font-weight: 700; margin-left: 3px; }

/* ribbon */
.ribbon { display: flex; background: #f8f9fc; border-bottom: 1px solid #a9bcbc; }
.group {
  display: flex;
  flex-direction: column;
  border-right: 1px solid;
  border-image: linear-gradient(#f8f9fc 2px, #a9adaf 2px, #a9adaf calc(100% - 3px), #f8f9fc 0) 1;
}
.body { display: flex; justify-content: center; height: 85px; padding: 1px 3px 0; }
.big { display: flex; flex-direction: column; align-items: center; min-width: 40px; padding: 4px 4px 0; }
.big span { max-width: 48px; margin-top: 10px; line-height: 17px; text-align: center; }
.big .caret { margin-top: 6px; }
.col { display: flex; flex-direction: column; }
.sm { display: flex; align-items: center; gap: 4px; height: 28px; padding: 0 4px; white-space: nowrap; }
.sm .caret { margin-left: 2px; }
.sm.off { color: #a9acad; }
.sm.off .caret { color: #a9acad; }
.inner-sep { width: 1px; height: 83px; margin: 1px 3px 0; background: #b3b7b9; }
.glabel { display: flex; justify-content: center; align-items: center; gap: 3px; height: 27px; padding: 0 5px; white-space: nowrap; }
.tinted .glabel { background: #f0f4f5; }

/* side panel */
.work { display: flex; flex: 1; min-height: 0; }
.side {
  position: relative;
  display: flex;
  flex-direction: column;
  flex: none;
  width: 282px;
  border-right: 3px solid #dadfdf;
  background: #f6fafb;
}
.sidetabs { display: flex; height: 26px; background: #dadfdf; }
.sidetabs button { display: flex; align-items: center; justify-content: center; width: 32px; }
.sidetabs .active { background: #f6fafb; }
.tools { display: flex; align-items: center; height: 32px; padding: 0 5px 0 10px; }
.tools button { display: flex; align-items: center; justify-content: center; width: 24px; height: 24px; }
.tools .w-tri { width: 16px; }
.tools .w-main { width: 19px; }
.tools .w-more { width: 20px; }
.tools .w-gear { width: 28px; }
.tools .last { margin-left: auto; }
.grip { width: 4px; height: 16px; margin: 0 20px 0 3px; }
.tools .on, .viewbar .on { background: #e0e2e5; border: 1px solid #aaafb2; }
.tsep { width: 1px; height: 24px; margin: 0 4px; background: #b5babc; }
.menu { position: relative; }
.menu::after {
  content: "";
  position: absolute;
  right: 1px;
  bottom: 1px;
  border: 2px solid #555;
  border-top-color: transparent;
  border-left-color: transparent;
}
.layers-tools { height: 30px; padding-left: 10px; }
.layers-tools .grip { margin: 0 20px 0 6px; }
.layers-tools .on + .on { margin-left: 0; border-left: 0; }
.filter { display: flex; align-items: center; padding-left: 12px; }
.filter > button { display: flex; justify-content: center; width: 22px; }
.search { position: relative; flex: none; width: 199px; margin-left: 4px; }
.search input { display: block; width: 100%; height: 29px; border: 1px solid #a5b2b3; background: #fff; font: inherit; padding: 0 24px 0 6px; }
.search button { position: absolute; right: 1px; top: 7px; color: #999; }

.treewrap { position: relative; margin: 5px 5px 2px 8px; overflow: hidden; }
.tree { width: 100%; table-layout: fixed; border-collapse: separate; border-spacing: 0; }
.c1 { width: 143px; }
.c2 { width: 104px; }
.tree th { height: 23px; padding: 0 5px; background: #fafafb; border-right: 1px solid #cfd3d5; border-bottom: 1px solid #cfd3d5; font-weight: 400; text-align: left; overflow: hidden; white-space: nowrap; }
.tree th:last-child { border-right: 0; }
.tree td { height: 22px; padding: 0; }
.tree td:first-child { border-right: 1px solid #e2e7ea; }
.node { display: flex; align-items: center; height: 22px; padding-left: 4px; white-space: nowrap; }
.node > .br { width: 16px; height: 22px; margin-right: 2px; }
.name { display: flex; align-items: center; height: 21px; margin-left: 5px; padding: 0 1px; gap: 2px; }
.name .s { width: 8px; height: 8px; margin-bottom: 9px; }
.datum { font-size: 13px; }
.bad { color: #fb4747; }
.strong { font-weight: 700; }
.picked { background: #b0e3fd; color: #222; }
.insert { height: 15px; background: linear-gradient(#6cc24a, #6cc24a) 3px 8px / 100% 2px no-repeat; }

/* scroll bars */
.vbar { display: flex; flex-direction: column; width: 15px; background: #dfe1e3; border: 1px solid #c6cacc; }
.vbar i, .hbar i { display: flex; align-items: center; justify-content: center; flex: none; width: 13px; height: 13px; background: #f7f8f9; }
.vbar b { background: #f8f9fb; border: 1px solid #bcc0c2; border-width: 1px 0; }
.vbar .down { margin-top: auto; }
.vbar i::after, .hbar i::after { content: ""; border: 4px solid transparent; }
.vbar .up::after { border-bottom-color: #a2a6a8; border-top: 0; }
.vbar .down::after { border-top-color: #a2a6a8; border-bottom: 0; }
.hbar .left::after { border-right-color: #a2a6a8; border-left: 0; }
.hbar .right::after { border-left-color: #a2a6a8; border-right: 0; }
.treebar { position: absolute; right: 0; top: 23px; bottom: 0; }
.t1 { flex: 0 0 86%; flex-basis: 215px; }
.t2 { flex: 0 0 62%; }
.hbars { display: flex; margin: 0 20px 0 8px; padding-bottom: 2px; }
.hbar { display: flex; flex: 1; height: 15px; border: 1px solid #d0d4d6; background: #dfe1e3; }
.hbar.first { flex: 0 0 143px; }
.hbar b { flex: 1; background: #f8f9fb; border: 1px solid #c6cacc; border-width: 0 1px; }
.hbar b.short { flex: 0 0 22px; }
.hbar span { flex: 1; }
.layers-tools::before { content: none; }
.hbars + .layers-tools { margin: 0 5px 0 8px; padding: 0 0 0 2px; border-top: 3px solid #dadfdf; height: 34px; }

/* layers */
.combo { display: flex; height: 25px; margin: 0 5px 0 8px; border: 1px solid #a9aeb0; background: #f8f9fb; }
.combo button { display: flex; align-items: center; justify-content: center; width: 24px; border-right: 1px solid #a9aeb0; }
.combo select { flex: 1; min-width: 0; appearance: none; border: 0; background: none; padding: 0 7px; font: inherit; color: inherit; }
.drop { display: flex; align-items: center; justify-content: center; width: 15px; border-left: 1px solid #a9aeb0; pointer-events: none; }
.layers { display: flex; flex: 1; min-height: 0; margin: 0 5px 5px 8px; background: #f8f9fc; }
.layers ul { flex: 1; overflow: hidden; font-size: 13px; }
.layers li { display: flex; align-items: center; height: 20px; padding-left: 4px; white-space: nowrap; }
.layers li .br { width: 16px; height: 20px; margin-right: 2px; }
.layers li .i { margin-right: 10px; }
.layers .root { padding-left: 3px; font-size: 12px; }
.surfboard { position: absolute; left: 191px; bottom: 0; width: 60px; height: 62px; }

/* drawing area */
.canvas { position: relative; flex: 1; min-width: 0; overflow: hidden; background: #e8eaee; }
.viewbar {
  display: flex;
  align-items: center;
  width: max-content;
  margin: 7px auto 0;
  padding: 2px;
  background: #f8f9fc;
  border: 1px solid #a0a3a5;
}
.viewbar button { display: flex; align-items: center; justify-content: center; width: 26px; height: 26px; }
.viewbar .on { width: 24px; margin: 0 1px; }
.model { position: absolute; left: 497px; top: 350px; width: 210px; height: 210px; }

.notice {
  position: absolute;
  right: 0;
  bottom: 0;
  width: 547px;
  background: #f5f6f8;
  border: 1px solid #fff;
  box-shadow: 0 0 8px rgba(0, 0, 0, .45);
}
.notice header { display: flex; align-items: center; height: 39px; padding: 0 3px 0 11px; border-bottom: 1px solid #b7bcbe; }
.notice h2 { flex: 1; margin-left: 20px; font-size: 12px; font-weight: 700; color: #111; }
.notice header button { margin-left: 6px; color: #333; }
.notice ul { height: 72px; padding: 8px 13px; }
.notice li { line-height: 29px; }
.notice footer { display: flex; align-items: center; justify-content: center; height: 38px; border-top: 1px solid #c2c6c9; background: #ebedef; }
.notice a { color: #146aa8; text-decoration: none; }

.activate { position: absolute; right: 89px; bottom: 10px; width: 188px; color: #a9acaf; opacity: .8; pointer-events: none; white-space: nowrap; }
.activate p { font: 19px/26px "Open Sans", "Noto Sans CJK SC", sans-serif; }
.activate .hint { font-size: 14px; line-height: 22px; }
.forum { position: absolute; right: 18px; bottom: 6px; width: 168px; color: #111; pointer-events: none; white-space: nowrap; }
.forum p { font: italic 300 41px/46px "Noto Sans CJK SC", sans-serif; }
.forum span { color: #ff6430; }
.forum .site { font: italic 16px/18px "Liberation Sans", sans-serif; color: #85888b; text-align: right; padding-right: 6px; }
.forum svg { position: absolute; left: 66px; top: -18px; width: 20px; height: 46px; }
.meter { position: absolute; right: 3px; bottom: 5px; width: 7px; height: 58px; border-radius: 4px; background: linear-gradient(#a4a7aa 70%, #23b35b 70%, #7ff27b); }
```
